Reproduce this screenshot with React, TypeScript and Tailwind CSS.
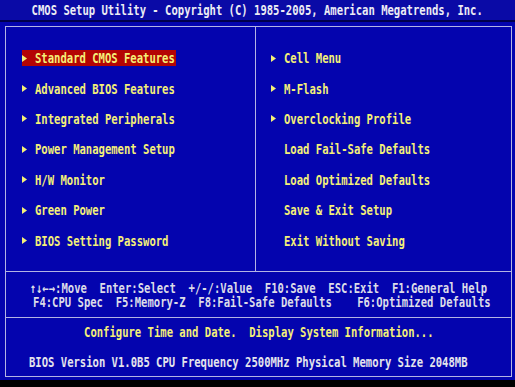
import React from 'react';

const leftMenu = [
    "Standard CMOS Features",
    "Advanced BIOS Features",
    "Integrated Peripherals",
    "Power Management Setup",
    "H/W Monitor",
    "Green Power",
    "BIOS Setting Password",
];

const rightMenu = [
    { label: "Cell Menu", arrow: true },
    { label: "M-Flash", arrow: true },
    { label: "Overclocking Profile", arrow: true },
    { label: "Load Fail-Safe Defaults", arrow: false },
    { label: "Load Optimized Defaults", arrow: false },
    { label: "Save & Exit Setup", arrow: false },
    { label: "Exit Without Saving", arrow: false },
];

// squeeze the mono font so it looks like the tall, narrow bios charset
function T({ children, className = "" }: { children: React.ReactNode; className?: string }) {
    return (
        <span className={"inline-block whitespace-pre leading-none scale-x-[0.754] " + className}>
            {children}
        </span>
    );
}

function Arrow() {
    return (
        <span className="w-[13px] shrink-0 flex items-center">
            <svg width="5" height="7" viewBox="0 0 5 7">
                <polygon points="0,0 5,3.5 0,7" fill="#f4f078" />
            </svg>
        </span>
    );
}

function MenuRow({ label, arrow, active = false }: { label: string; arrow: boolean; active?: boolean }) {
    return (
        <div className="h-[30.4px] flex items-center">
            <div className={"h-[16px] flex items-center " + (active ? "w-[154px] bg-[#b40404]" : "")}>
                {arrow ? <Arrow /> : <span className="w-[13px] shrink-0" />}
                <T className="origin-left text-[#f4f078]">{label}</T>
            </div>
        </div>
    );
}

export default function App() {
    return (
        <div className="w-[515px] h-[387px] bg-black overflow-hidden flex flex-col font-['DejaVu_Sans_Mono',monospace] font-bold text-[14px]">
            <div className="h-[20px] bg-[#0a0aa6] flex items-center justify-center text-[#ececf4]">
                <T className="origin-center">CMOS Setup Utility - Copyright (C) 1985-2005, American Megatrends, Inc.</T>
            </div>
            <div className="h-[2px] bg-[#00004c]" />
            <div className="h-[358px] bg-[#0404ae] pt-[4px] pl-[5px] pr-[3px] pb-[3px]">
                <div className="h-full border border-[#b4b4e4] flex flex-col">
                    <div className="h-[244px] grid grid-cols-[250px_1fr]">
                        <div className="border-r border-[#b4b4e4] pt-[16px] pl-[16px]">
                            {leftMenu.map((item, i) => (
                                <MenuRow key={item} label={item} arrow active={i === 0} />
                            ))}
                        </div>
                        <div className="pt-[16px] pl-[15px]">
                            {rightMenu.map(item => (
                                <MenuRow key={item.label} label={item.label} arrow={item.arrow} />
                            ))}
                        </div>
                    </div>
                    <div className="h-[46px] border-t border-[#b4b4e4] flex flex-col items-center justify-center text-[#dcdce8]">
                        <div className="h-[14px] flex items-center justify-center w-full">
                            <T className="origin-center">↑↓←→:Move  Enter:Select  +/-/:Value  F10:Save  ESC:Exit  F1:General Help</T>
                        </div>
                        <div className="h-[14px] flex items-center justify-center w-full">
                            <T className="origin-center"> F4:CPU Spec  F5:Memory-Z  F8:Fail-Safe Defaults    F6:Optimized Defaults</T>
                        </div>
                    </div>
                    <div className="flex-1 border-t border-[#b4b4e4] pt-[7px] flex flex-col gap-[16px]">
                        <div className="h-[14px] flex items-center justify-center">
                            <T className="origin-center text-[#f4f078]">Configure Time and Date.  Display System Information...</T>
                        </div>
                        <div className="h-[14px] flex items-center pl-[23px]">
                            <T className="origin-left text-[#e4e4ec]">BIOS Version V1.0B5 CPU Frequency 2500MHz Physical Memory Size 2048MB</T>
                        </div>
                    </div>
                </div>
            </div>
        </div>
    );
}
